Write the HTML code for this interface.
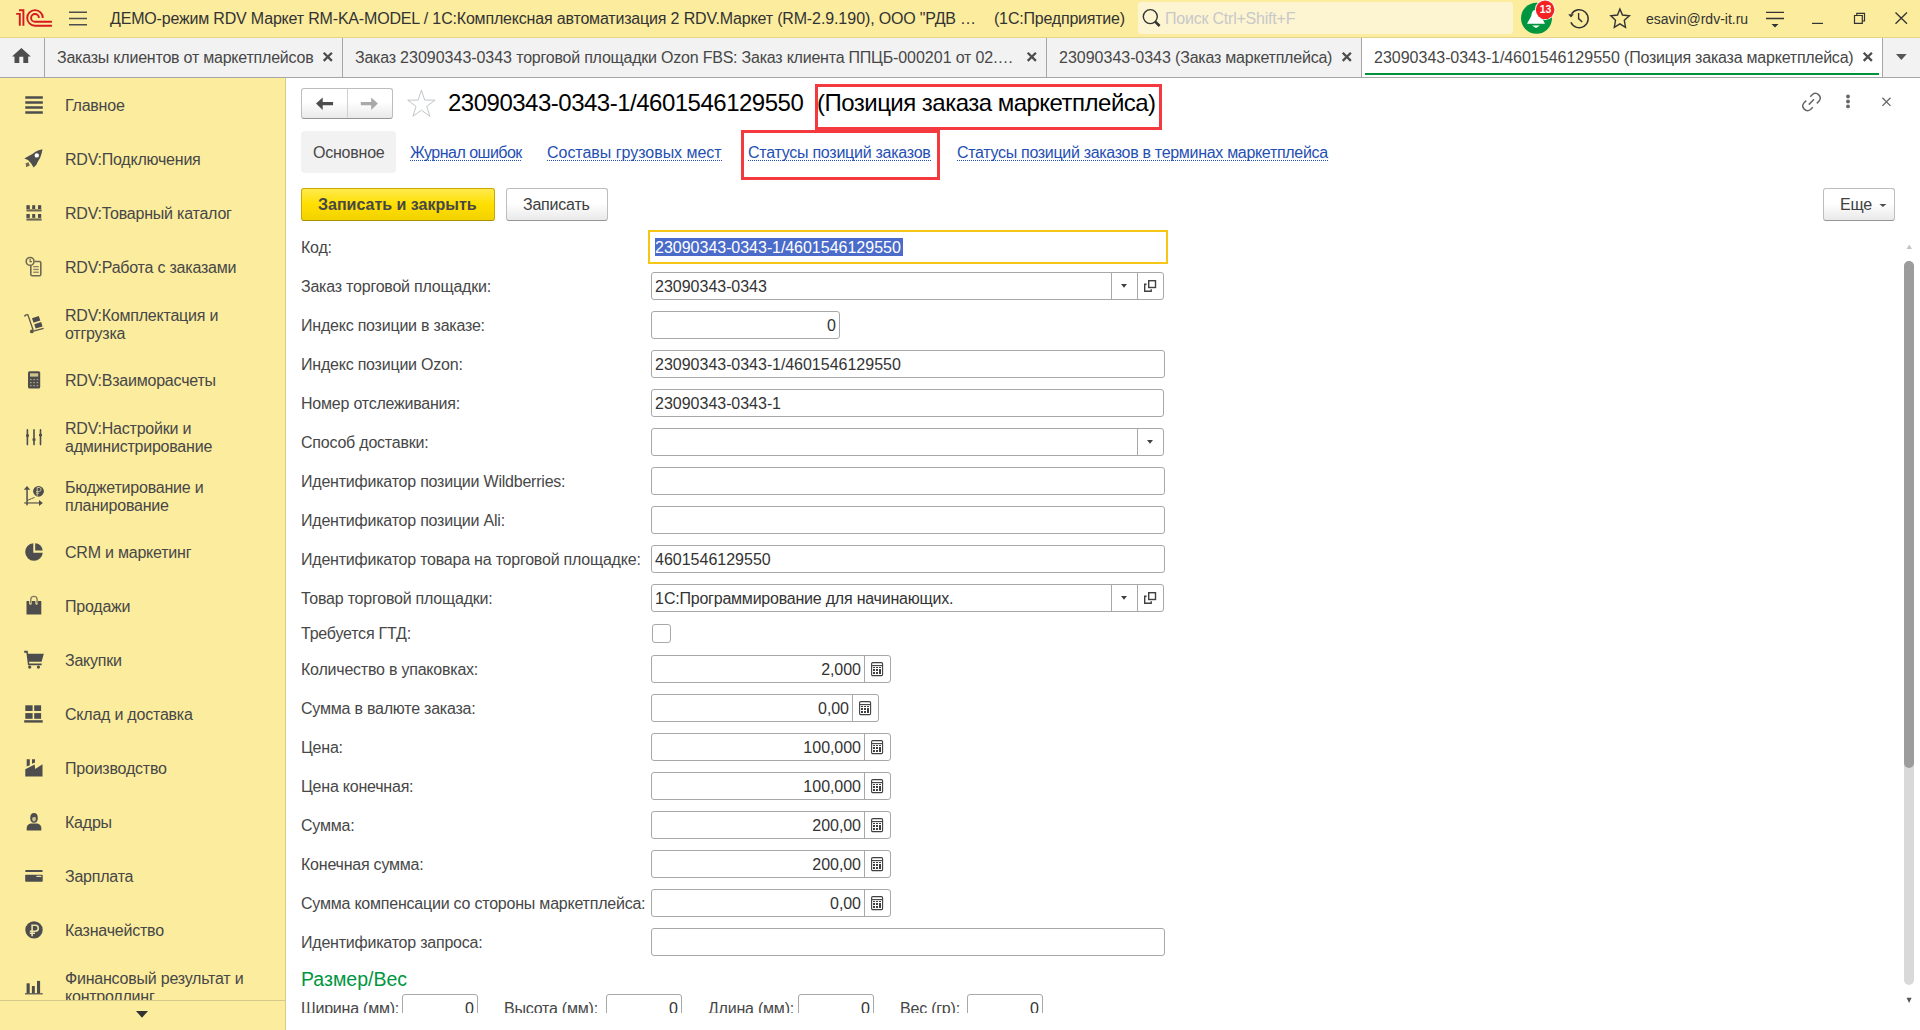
<!DOCTYPE html>
<html><head><meta charset="utf-8">
<style>
*{box-sizing:border-box;margin:0;padding:0}
html,body{width:1920px;height:1030px;overflow:hidden;background:#fff;font-family:"Liberation Sans",sans-serif;font-size:16px;color:#474747}
.abs{position:absolute}
#top{position:absolute;left:0;top:0;width:1920px;height:38px;background:#FBEC9E;border-bottom:1px solid #E3D48A}
#tabs{position:absolute;left:0;top:38px;width:1920px;height:40px;background:#F2F2F2;border-bottom:1px solid #A6A6A6}
#side{position:absolute;left:0;top:78px;width:286px;height:952px;background:#FBEC9E;border-right:1px solid #D9CB86}
.t{position:absolute;white-space:nowrap;line-height:18px;letter-spacing:-0.22px}
.d{letter-spacing:0}
.ttl .d{letter-spacing:-0.5px}
.tab{position:absolute;top:0;height:39px;border-left:1px solid #A6A6A6}
.tab .t{top:11px}
.x{position:absolute;top:14px;width:11px;height:11px}
.si{position:absolute;left:0;width:285px}
.si .t{left:65px}
.ic{position:absolute;left:24px;width:20px;height:20px}
.btn{position:absolute;border:1px solid #BDBDBD;border-bottom-color:#969696;border-radius:3px;background:linear-gradient(#FFFFFF 45%,#E9E9E9)}
.ybtn{border-color:#C7A900;border-bottom-color:#A88F00;background:linear-gradient(#FFEA4D,#FFDF00 50%,#F2D200)}
.lnk{color:#1F4FB3;background-image:linear-gradient(to right,#1F4FB3 50%,transparent 50%);background-size:2px 1px;background-repeat:repeat-x;background-position:0 16px;padding-bottom:0}
.inp{position:absolute;height:28px;border:1px solid #A8A8A8;border-radius:3px;background:#fff}
.vt{color:#333}
</style></head>
<body>
<div id="top">
<svg class="abs" style="left:0;top:0" width="60" height="38" viewBox="0 0 60 38"><g fill="none" stroke="#D71920" stroke-width="1.9" stroke-linecap="butt"><path d="M16.2 13.9H19.8V25.8M19 10.2H23.4V25.8"/><path d="M42.8 17.9A7.8 7.8 0 1 0 35 25.7H51.9M38.9 17.9A3.9 3.9 0 1 0 35 21.8H51.9"/></g></svg>
<svg class="abs" style="left:68px;top:0" width="22" height="38"><g stroke="#4D4D4D" stroke-width="1.6"><path d="M1 12.3H19M1 18.5H19M1 24.8H19"/></g></svg>
<div class="t" style="left:110px;top:10px;color:#333;letter-spacing:-0.18px">ДЕМО-режим RDV Маркет RM-KA-MODEL / <span class="d">1</span>С:Комплексная автоматизация <span class="d">2</span> RDV.Маркет (RM-<span class="d">2</span>.<span class="d">9</span>.<span class="d">190</span>), ООО "РДВ …</div>
<div class="t" style="left:994px;top:10px;color:#333">(<span class="d">1</span>С:Предприятие)</div>
<div class="abs" style="left:1138px;top:2px;width:375px;height:32px;background:#FDF5D2;border-radius:3px"></div>
<svg class="abs" style="left:1138px;top:0" width="30" height="38"><circle cx="12.3" cy="16.6" r="7" fill="none" stroke="#333" stroke-width="1.4"/><path d="M17.2 21.6L21.6 26" stroke="#333" stroke-width="2.6"/></svg>
<div class="t" style="left:1165px;top:10px;color:#C8C8C8">Поиск Ctrl+Shift+F</div>
<svg class="abs" style="left:1516px;top:0" width="40" height="36" viewBox="1516 0 40 36">
<circle cx="1536.5" cy="18.25" r="15.5" fill="#009640"/>
<path d="M1534.8 10C1533 10 1531.5 13 1531.3 16L1527 23.8H1545L1541 16" fill="#fff"/>
<path d="M1532 25.4H1540L1536 28Z" fill="#fff"/>
<circle cx="1545.1" cy="9.8" r="10.2" fill="#fff"/>
<circle cx="1545.1" cy="9.8" r="9.3" fill="#F42323"/>

</svg>
<div class="abs" style="left:1535px;top:3px;width:21px;text-align:center;font-weight:bold;font-size:10.5px;line-height:12px;color:#fff;letter-spacing:0"><span class="d">13</span></div>
<svg class="abs" style="left:1560px;top:0" width="40" height="36" viewBox="1560 0 40 36">
<path d="M1570.9 22.3A9 9 0 1 0 1571.6 13.8" fill="none" stroke="#333" stroke-width="1.5"/>
<path d="M1568.2 14.3L1573.8 14.3L1571 17.6Z" fill="#333"/>
<path d="M1578.6 13V18.6L1582.2 22" fill="none" stroke="#333" stroke-width="1.4"/>
</svg>
<svg class="abs" style="left:1605px;top:0" width="30" height="36" viewBox="1605 0 30 36">
<path d="M1619.9 9.1L1622.5 15L1629.4 15.7L1624.3 20.3L1625.5 27.4L1619.9 23.8L1614.3 27.4L1615.5 20.3L1610.8 15.7L1617.5 15Z" fill="none" stroke="#333" stroke-width="1.4" stroke-linejoin="miter"/>
</svg>
<div class="t" style="left:1646px;top:10px;color:#333;font-size:14px;letter-spacing:0">esavin@rdv-it.ru</div>
<svg class="abs" style="left:1760px;top:0" width="160" height="36" viewBox="1760 0 160 36">
<path d="M1766 12.3H1784M1766 18.5H1784" stroke="#333" stroke-width="1.3"/>
<path d="M1771.5 24H1778.5L1775 27.6Z" fill="#333"/>
<path d="M1812 23.4H1823" stroke="#333" stroke-width="1.2"/>
<path d="M1854.5 15.5H1862.3V23.3H1854.5Z M1856.8 15.5V13.4H1864.5V21H1862.3" fill="none" stroke="#333" stroke-width="1.2"/>
<path d="M1895.5 12.5L1907 23.8M1907 12.5L1895.5 23.8" stroke="#333" stroke-width="1.3"/>
</svg>
</div>
<div id="tabs">
<svg class="abs" style="left:12px;top:9px" width="20" height="18" viewBox="0 0 20 18"><path d="M9.4 1.1L0 9.6H2.5V16H7.3V9.8H11.3V16H16.2V9.6H18.8Z" fill="#4D4D4D"/></svg>
<div class="abs" style="left:44px;top:0;width:1px;height:39px;background:#A6A6A6"></div>
<div class="t" style="left:57px;top:11px">Заказы клиентов от маркетплейсов</div>
<svg class="abs" style="left:322px;top:13px" width="12" height="12" viewBox="0 0 12 12"><path d="M1.7 1.7L9.9 9.9M9.9 1.7L1.7 9.9" stroke="#4D4D4D" stroke-width="2.3"/></svg>
<div class="abs" style="left:342px;top:0;width:1px;height:39px;background:#A6A6A6"></div>
<div class="t" style="left:355px;top:11px">Заказ <span class="d">23090343</span>-<span class="d">0343</span> торговой площадки Ozon FBS: Заказ клиента ППЦБ-<span class="d">000201</span> от <span class="d">02</span>.…</div>
<svg class="abs" style="left:1026px;top:13px" width="12" height="12" viewBox="0 0 12 12"><path d="M1.7 1.7L9.9 9.9M9.9 1.7L1.7 9.9" stroke="#4D4D4D" stroke-width="2.3"/></svg>
<div class="abs" style="left:1046px;top:0;width:1px;height:39px;background:#A6A6A6"></div>
<div class="t" style="left:1059px;top:11px"><span class="d">23090343</span>-<span class="d">0343</span> (Заказ маркетплейса)</div>
<svg class="abs" style="left:1341px;top:13px" width="12" height="12" viewBox="0 0 12 12"><path d="M1.7 1.7L9.9 9.9M9.9 1.7L1.7 9.9" stroke="#4D4D4D" stroke-width="2.3"/></svg>
<div class="abs" style="left:1361px;top:0;width:521px;height:39px;background:#fff"></div>
<div class="abs" style="left:1361px;top:0;width:1px;height:39px;background:#A6A6A6"></div>
<div class="t" style="left:1374px;top:11px"><span class="d">23090343</span>-<span class="d">0343</span>-<span class="d">1</span>/<span class="d">4601546129550</span> (Позиция заказа маркетплейса)</div>
<svg class="abs" style="left:1862px;top:13px" width="12" height="12" viewBox="0 0 12 12"><path d="M1.7 1.7L9.9 9.9M9.9 1.7L1.7 9.9" stroke="#4D4D4D" stroke-width="2.3"/></svg>
<div class="abs" style="left:1365px;top:35px;width:514px;height:2px;background:#00913D"></div>
<div class="abs" style="left:1882px;top:0;width:1px;height:39px;background:#A6A6A6"></div>
<svg class="abs" style="left:1890px;top:14px" width="20" height="10" viewBox="0 0 20 10"><path d="M6 2H16.7L11.35 8Z" fill="#555"/></svg>
</div>
<div id="side">
<div class="abs" style="left:0;top:0;width:285px;height:922px;overflow:hidden">
<div class="t" style="left:65px;top:19px">Главное</div>
<div class="t" style="left:65px;top:73px">RDV:Подключения</div>
<div class="t" style="left:65px;top:127px">RDV:Товарный каталог</div>
<div class="t" style="left:65px;top:181px">RDV:Работа с заказами</div>
<div class="t" style="left:65px;top:229px">RDV:Комплектация и<br>отгрузка</div>
<div class="t" style="left:65px;top:294px">RDV:Взаиморасчеты</div>
<div class="t" style="left:65px;top:342px">RDV:Настройки и<br>администрирование</div>
<div class="t" style="left:65px;top:401px">Бюджетирование и<br>планирование</div>
<div class="t" style="left:65px;top:466px">CRM и маркетинг</div>
<div class="t" style="left:65px;top:520px">Продажи</div>
<div class="t" style="left:65px;top:574px">Закупки</div>
<div class="t" style="left:65px;top:628px">Склад и доставка</div>
<div class="t" style="left:65px;top:682px">Производство</div>
<div class="t" style="left:65px;top:736px">Кадры</div>
<div class="t" style="left:65px;top:790px">Зарплата</div>
<div class="t" style="left:65px;top:844px">Казначейство</div>
<div class="t" style="left:65px;top:892px">Финансовый результат и<br>контроллинг</div>
</div>
<svg class="abs" style="left:0;top:-78px" width="60" height="1030" viewBox="0 0 60 1030"><path d="M25.3 96.3H42.8V98.7H25.3ZM25.3 101.3H42.8V103.7H25.3ZM25.3 106.3H42.8V108.7H25.3ZM25.3 111.3H42.8V113.7H25.3Z" fill="#4D4D4D"/><path d="M42.5 149.2L38.6 150.3Q35.2 151.6 32.8 153.8L24.3 158.4L28 160L31 163.2L33.6 167.4L36.4 164.8L37.9 161.5Q40.6 158 41.6 153.6Z" fill="#4D4D4D"/><circle cx="36.8" cy="155.4" r="2.2" fill="#fff"/><path d="M25.6 163.2L28.6 162.3L29.8 165.4L26.2 167.2Z" fill="#6d6a58"/><g fill="#4D4D4D"><rect x="26.4" y="205.2" width="3.4" height="3.8"/><rect x="32.2" y="205.2" width="3" height="3.8"/><rect x="38" y="205.2" width="3.2" height="3.8"/><rect x="26.4" y="214" width="3.4" height="3.9"/><rect x="32.2" y="214" width="3" height="3.9"/><rect x="38" y="214" width="3.2" height="3.9"/></g><g fill="#6f6a55"><rect x="26.4" y="209.3" width="15.2" height="2.2"/><rect x="26.4" y="218.4" width="15.2" height="2.2"/></g><g fill="none" stroke="#6f6a55" stroke-width="1.6"><path d="M34.5 261.5H39.5Q40.8 261.5 40.8 263V274.5Q40.8 275.8 39.5 275.8H32.2Q30.8 275.8 30.8 274.5V265.5"/><circle cx="30.1" cy="261.4" r="3.9"/></g><path d="M30.1 259V261.6H32" stroke="#6f6a55" stroke-width="1.2" fill="none"/><g fill="#8a846c"><rect x="33.2" y="266" width="5.6" height="1.3"/><rect x="33.2" y="268.8" width="5.6" height="1.3"/><rect x="33.2" y="271.6" width="5.6" height="1.3"/></g><g fill="none" stroke="#5a5648" stroke-width="1.3"><path d="M24.6 316.5Q25 314.6 27.8 314.6L33.3 330.5"/><path d="M33.4 331.2L43.6 328.3"/></g><circle cx="31.8" cy="331.4" r="1.9" fill="#5a5648"/><g fill="#4D4D4D"><path d="M32 318.3L38.8 316L40.3 320.6L33.5 322.8Z"/><path d="M34.3 324.3L41.2 322L42.5 326.4L35.6 328.6Z"/></g><rect x="28" y="371.2" width="12.2" height="17.4" rx="1.6" fill="#4D4D4D"/><rect x="30" y="373.3" width="8.2" height="3.3" fill="#FBEC9E" opacity="0.75"/><g fill="#FBEC9E" opacity="0.55"><rect x="30" y="379" width="1.6" height="1.2"/><rect x="33.3" y="379" width="1.6" height="1.2"/><rect x="36.6" y="379" width="1.6" height="1.2"/><rect x="30" y="382" width="1.6" height="1.2"/><rect x="33.3" y="382" width="1.6" height="1.2"/><rect x="36.6" y="382" width="1.6" height="1.2"/><rect x="30" y="385" width="1.6" height="1.2"/><rect x="33.3" y="385" width="1.6" height="1.2"/><rect x="36.6" y="385" width="1.6" height="1.2"/></g><g stroke="#4D4D4D" stroke-width="1.6" stroke-linecap="round"><path d="M27.4 429.8V444.6M34 429.8V444.6M40.5 429.8V444.6"/></g><g fill="#4D4D4D"><rect x="26" y="434.5" width="3" height="2.2"/><rect x="32.5" y="438.5" width="3" height="2.2"/><rect x="39" y="434" width="3" height="2.2"/></g><g fill="#4D4D4D"><path d="M27 486.1L30.2 489.8H23.8Z"/><rect x="26.3" y="489.5" width="1.5" height="15.8"/><path d="M42.8 502.9L39 499.9V505.9Z"/><rect x="24.2" y="502.2" width="15" height="1.5" opacity="0.75"/><circle cx="38.5" cy="491.3" r="5.4"/><path d="M27.6 500.3L30 499.3L31.5 498.6L34.5 497.5" stroke="#4D4D4D" stroke-width="0.9" fill="none"/></g><path d="M37.2 496.5V487.5H39.3Q41 487.5 41 489.5Q41 491.4 39.3 491.4H36M36 493.3H39" stroke="#d9cf9a" stroke-width="0.9" fill="none"/><path d="M33.3 543.2A8.8 8.8 0 1 0 42.8 552.8H33.3Z" fill="#4D4D4D"/><path d="M35.2 543.2A7.5 7.5 0 0 1 42.6 550.6H35.2Z" fill="#4D4D4D"/><path d="M26.5 601H29.2V604Q30.5 605.5 31.8 604V601H35.4V604Q36.6 605.5 37.8 604V601H41.3V614.5H26.5Z" fill="#4D4D4D"/><path d="M30.8 603.5V599.5Q30.8 596.4 34 596.4Q37.1 596.4 37.1 599.5V603.5" fill="none" stroke="#827c62" stroke-width="1.4"/><g fill="#4D4D4D"><path d="M24.2 650.8H27.7L28.1 653.8H43.8L41.6 661.8H29L29.3 663.4H41.7V665.2H28L26.4 652.7H24.2Z"/><circle cx="29.7" cy="667.1" r="1.6"/><circle cx="38.4" cy="667.1" r="1.6"/></g><g fill="#4D4D4D"><rect x="25.3" y="705.3" width="7.3" height="5.7"/><rect x="34.2" y="705.3" width="6.9" height="5.7"/><rect x="25.3" y="713.1" width="7.3" height="5.7"/><rect x="34.2" y="713.1" width="6.9" height="5.7"/><rect x="24.2" y="720.2" width="18.5" height="2.4"/></g><g fill="#4D4D4D"><path d="M26.7 759.2H29.8V765.3L26.7 766.6Z"/><path d="M32 759.2H35V762.6L32 763.8Z"/><path d="M25.3 769.3L34.6 764.5L35.2 769L42.5 764.3V776.6H25.3Z"/></g><g fill="#4D4D4D"><path d="M30.2 818Q30.2 813.1 34 813.1Q37.8 813.1 37.8 818Q37.8 822.7 34 822.7Q30.2 822.7 30.2 818Z"/><path d="M26.7 828Q26.7 824.8 30.5 823.4H37.5Q41.3 824.8 41.3 828V830.6H26.7Z"/></g><path d="M32.2 817.8Q34 816.5 35.8 817.2V819.8Q35.3 821.5 34 821.5Q32.7 821.5 32.2 819.8Z" fill="#c9c08e"/><g fill="#4D4D4D"><rect x="25.2" y="870" width="17.5" height="2" rx="0.8"/><rect x="25.2" y="874.7" width="17.5" height="7.1" rx="0.8"/></g><rect x="36.3" y="875.8" width="5.2" height="1.3" rx="0.6" fill="#e8dfa6"/><circle cx="34" cy="929.9" r="8.7" fill="#4D4D4D"/><path d="M32.1 936.3V925.3H35.4Q38.3 925.3 38.3 928.3Q38.3 931.2 35.4 931.2H29.8M29.8 933.3H35" stroke="#efe5aa" stroke-width="1.6" fill="none"/><g fill="#4D4D4D"><rect x="26.6" y="983.3" width="3.1" height="10.2"/><rect x="31.9" y="986" width="2.9" height="7.5"/><rect x="37" y="980.9" width="3.1" height="12.6"/><rect x="25" y="993" width="17.7" height="1.5" opacity="0.8"/></g></svg>
<div class="abs" style="left:0;top:922px;width:285px;height:1px;background:#D6C98C"></div>
<svg class="abs" style="left:130px;top:928px" width="24" height="14" viewBox="0 0 24 14"><path d="M6 5H18L12 11.7Z" fill="#333"/></svg>
</div>










<!--FORM-->
<div class="btn" style="left:301px;top:88px;width:92px;height:31px"></div>
<div class="abs" style="left:347px;top:89px;width:1px;height:29px;background:#D0D0D0"></div>
<svg class="abs" style="left:300px;top:85px" width="100" height="36" viewBox="300 85 100 36"><path d="M316 103.6L322.7 97.4V102H333.1V105.2H322.7V109.9Z" fill="#4D4D4D"/><path d="M377.9 103.6L371.2 97.4V102H360.8V105.2H371.2V109.9Z" fill="#A9A9A9"/></svg>
<svg class="abs" style="left:400px;top:85px" width="44" height="36" viewBox="400 85 44 36"><path d="M421.40 90.20L424.69 100.07L435.10 100.15L426.73 106.33L429.86 116.25L421.40 110.20L412.94 116.25L416.07 106.33L407.70 100.15L418.11 100.07Z" fill="none" stroke="#B9C0C4" stroke-width="0.9" stroke-linejoin="miter"/></svg>
<div class="t ttl" style="left:448px;top:89px;font-size:24px;line-height:28px;color:#000;letter-spacing:-0.5px"><span class="d">23090343</span>-<span class="d">0343</span>-<span class="d">1</span>/<span class="d">4601546129550</span></div>
<div class="t ttl" style="left:817px;top:89px;font-size:24px;line-height:28px;color:#000;letter-spacing:-0.52px">(Позиция заказа маркетплейса)</div>
<svg class="abs" style="left:1795px;top:85px" width="110" height="32" viewBox="1795 85 110 32"><g fill="none" stroke="#666" stroke-width="1.5"><path d="M1810.2 96.8L1812.5 94.5A4.7 4.7 0 0 1 1819.1 101.1L1816.8 103.4"/><path d="M1806.2 100.6L1803.9 102.9A4.7 4.7 0 0 0 1810.5 109.5L1812.8 107.2"/><path d="M1808.8 104.6L1814 99.3"/></g><g fill="#666"><circle cx="1848" cy="96.5" r="1.9"/><circle cx="1848" cy="101.5" r="1.9"/><circle cx="1848" cy="106.4" r="1.9"/></g><path d="M1882.4 97.7L1890.5 105.9M1890.5 97.7L1882.4 105.9" stroke="#666" stroke-width="1.3"/></svg>
<div class="abs" style="left:301px;top:131px;width:95px;height:42px;background:#F2F2F2;border-radius:4px"></div>
<div class="t" style="left:313px;top:144px">Основное</div>
<div class="t lnk" style="left:410px;top:144px;letter-spacing:-0.52px">Журнал ошибок</div>
<div class="t lnk" style="left:547px;top:144px;letter-spacing:-0.03px">Составы грузовых мест</div>
<div class="t lnk" style="left:748px;top:144px;letter-spacing:-0.26px">Статусы позиций заказов</div>
<div class="t lnk" style="left:957px;top:144px;letter-spacing:-0.31px">Статусы позиций заказов в терминах маркетплейса</div>
<div class="abs" style="left:655px;top:238px;width:1px;height:18px;background:#222"></div>
<div class="btn ybtn" style="left:301px;top:188px;width:194px;height:33px"></div>
<div class="t" style="left:318px;top:196px;font-weight:bold;letter-spacing:0">Записать и закрыть</div>
<div class="btn" style="left:506px;top:188px;width:102px;height:33px"></div>
<div class="t" style="left:523px;top:196px;color:#404040">Записать</div>
<div class="btn" style="left:1823px;top:188px;width:72px;height:33px"></div>
<div class="t" style="left:1840px;top:196px;color:#404040">Еще</div>
<svg class="abs" style="left:1876px;top:200px" width="14" height="10" viewBox="1876 200 14 10"><path d="M1879.4 204H1886.4L1882.9 207Z" fill="#4D4D4D"/></svg>
<div class="abs" style="left:815px;top:84px;width:347px;height:46px;border:3px solid #F4393F"></div>
<div class="abs" style="left:741px;top:130px;width:199px;height:50px;border:3px solid #F4393F"></div>
<div class="t" style="left:301px;top:239px">Код:</div>
<div class="abs" style="left:648px;top:230px;width:520px;height:34px;border:2px solid #F5C518;background:#fff"></div>
<div class="abs" style="left:655px;top:238px;width:248px;height:18px;background:#4A6BC9"></div>
<div class="t" style="left:655px;top:239px;color:#fff"><span class="d">23090343</span>-<span class="d">0343</span>-<span class="d">1</span>/<span class="d">4601546129550</span></div>
<div class="t" style="left:301px;top:278px">Заказ торговой площадки:</div>
<div class="inp" style="left:651px;top:272px;width:513px"></div>
<div class="t vt" style="left:655px;top:278px"><span class="d">23090343</span>-<span class="d">0343</span></div>
<div class="abs" style="left:1111px;top:272px;width:1px;height:28px;background:#A8A8A8"></div>
<div class="abs" style="left:1137px;top:272px;width:1px;height:28px;background:#A8A8A8"></div>
<svg class="abs" style="left:1118px;top:282px" width="12" height="8" viewBox="0 0 12 8"><path d="M3 2H9L6 5.7Z" fill="#404040"/></svg>
<svg class="abs" style="left:1142px;top:278px" width="18" height="18" viewBox="1142 278 18 18"><g fill="none" stroke="#404040" stroke-width="1.4"><rect x="1148.7" y="280.7" width="6.8" height="6.8"/><path d="M1146.6 284.2H1144.7V291.3H1151.2V289.3"/></g></svg>
<div class="t" style="left:301px;top:317px">Индекс позиции в заказе:</div>
<div class="inp" style="left:651px;top:311px;width:189px"></div>
<div class="t vt" style="right:1084px;top:317px"><span class="d">0</span></div>
<div class="t" style="left:301px;top:356px">Индекс позиции Ozon:</div>
<div class="inp" style="left:651px;top:350px;width:514px"></div>
<div class="t vt" style="left:655px;top:356px"><span class="d">23090343</span>-<span class="d">0343</span>-<span class="d">1</span>/<span class="d">4601546129550</span></div>
<div class="t" style="left:301px;top:395px">Номер отслеживания:</div>
<div class="inp" style="left:651px;top:389px;width:513px"></div>
<div class="t vt" style="left:655px;top:395px"><span class="d">23090343</span>-<span class="d">0343</span>-<span class="d">1</span></div>
<div class="t" style="left:301px;top:434px">Способ доставки:</div>
<div class="inp" style="left:651px;top:428px;width:513px"></div>
<div class="abs" style="left:1137px;top:428px;width:1px;height:28px;background:#A8A8A8"></div>
<svg class="abs" style="left:1144px;top:438px" width="12" height="8" viewBox="0 0 12 8"><path d="M3 2H9L6 5.7Z" fill="#404040"/></svg>
<div class="t" style="left:301px;top:473px">Идентификатор позиции Wildberries:</div>
<div class="inp" style="left:651px;top:467px;width:514px"></div>
<div class="t" style="left:301px;top:512px">Идентификатор позиции Ali:</div>
<div class="inp" style="left:651px;top:506px;width:514px"></div>
<div class="t" style="left:301px;top:551px">Идентификатор товара на торговой площадке:</div>
<div class="inp" style="left:651px;top:545px;width:514px"></div>
<div class="t vt" style="left:655px;top:551px"><span class="d">4601546129550</span></div>
<div class="t" style="left:301px;top:590px">Товар торговой площадки:</div>
<div class="inp" style="left:651px;top:584px;width:513px"></div>
<div class="t vt" style="left:655px;top:590px"><span class="d">1</span>С:Программирование для начинающих.</div>
<div class="abs" style="left:1111px;top:584px;width:1px;height:28px;background:#A8A8A8"></div>
<div class="abs" style="left:1137px;top:584px;width:1px;height:28px;background:#A8A8A8"></div>
<svg class="abs" style="left:1118px;top:594px" width="12" height="8" viewBox="0 0 12 8"><path d="M3 2H9L6 5.7Z" fill="#404040"/></svg>
<svg class="abs" style="left:1142px;top:590px" width="18" height="18" viewBox="1142 590 18 18"><g fill="none" stroke="#404040" stroke-width="1.4"><rect x="1148.7" y="592.7" width="6.8" height="6.8"/><path d="M1146.6 596.2H1144.7V603.3H1151.2V601.3"/></g></svg>
<div class="t" style="left:301px;top:625px">Требуется ГТД:</div>
<div class="abs" style="left:652px;top:624px;width:19px;height:19px;border:1px solid #A8A8A8;border-radius:3px"></div>
<div class="t" style="left:301px;top:661px">Количество в упаковках:</div>
<div class="inp" style="left:651px;top:655px;width:240px"></div>
<div class="abs" style="left:864px;top:655px;width:1px;height:28px;background:#A8A8A8"></div>
<div class="t vt" style="right:1059px;top:661px"><span class="d">2</span>,<span class="d">000</span></div>
<svg class="abs" style="left:871px;top:662px" width="13" height="15" viewBox="0 0 13 15"><g fill="none" stroke="#404040" stroke-width="1.1"><rect x="0.6" y="0.6" width="11" height="13" rx="1.2"/><path d="M0.6 3.6H11.6"/></g><g fill="#404040"><rect x="2" y="5" width="2" height="1"/><rect x="5" y="5" width="2" height="1"/><rect x="8" y="5" width="2" height="1"/><rect x="2" y="7" width="2" height="2"/><rect x="5" y="7" width="2" height="2"/><rect x="2" y="10" width="2" height="2"/><rect x="5" y="10" width="2" height="2"/><rect x="8" y="7" width="2" height="5"/></g></svg>
<div class="t" style="left:301px;top:700px">Сумма в валюте заказа:</div>
<div class="inp" style="left:651px;top:694px;width:228px"></div>
<div class="abs" style="left:852px;top:694px;width:1px;height:28px;background:#A8A8A8"></div>
<div class="t vt" style="right:1071px;top:700px"><span class="d">0</span>,<span class="d">00</span></div>
<svg class="abs" style="left:859px;top:701px" width="13" height="15" viewBox="0 0 13 15"><g fill="none" stroke="#404040" stroke-width="1.1"><rect x="0.6" y="0.6" width="11" height="13" rx="1.2"/><path d="M0.6 3.6H11.6"/></g><g fill="#404040"><rect x="2" y="5" width="2" height="1"/><rect x="5" y="5" width="2" height="1"/><rect x="8" y="5" width="2" height="1"/><rect x="2" y="7" width="2" height="2"/><rect x="5" y="7" width="2" height="2"/><rect x="2" y="10" width="2" height="2"/><rect x="5" y="10" width="2" height="2"/><rect x="8" y="7" width="2" height="5"/></g></svg>
<div class="t" style="left:301px;top:739px">Цена:</div>
<div class="inp" style="left:651px;top:733px;width:240px"></div>
<div class="abs" style="left:864px;top:733px;width:1px;height:28px;background:#A8A8A8"></div>
<div class="t vt" style="right:1059px;top:739px"><span class="d">100</span>,<span class="d">000</span></div>
<svg class="abs" style="left:871px;top:740px" width="13" height="15" viewBox="0 0 13 15"><g fill="none" stroke="#404040" stroke-width="1.1"><rect x="0.6" y="0.6" width="11" height="13" rx="1.2"/><path d="M0.6 3.6H11.6"/></g><g fill="#404040"><rect x="2" y="5" width="2" height="1"/><rect x="5" y="5" width="2" height="1"/><rect x="8" y="5" width="2" height="1"/><rect x="2" y="7" width="2" height="2"/><rect x="5" y="7" width="2" height="2"/><rect x="2" y="10" width="2" height="2"/><rect x="5" y="10" width="2" height="2"/><rect x="8" y="7" width="2" height="5"/></g></svg>
<div class="t" style="left:301px;top:778px">Цена конечная:</div>
<div class="inp" style="left:651px;top:772px;width:240px"></div>
<div class="abs" style="left:864px;top:772px;width:1px;height:28px;background:#A8A8A8"></div>
<div class="t vt" style="right:1059px;top:778px"><span class="d">100</span>,<span class="d">000</span></div>
<svg class="abs" style="left:871px;top:779px" width="13" height="15" viewBox="0 0 13 15"><g fill="none" stroke="#404040" stroke-width="1.1"><rect x="0.6" y="0.6" width="11" height="13" rx="1.2"/><path d="M0.6 3.6H11.6"/></g><g fill="#404040"><rect x="2" y="5" width="2" height="1"/><rect x="5" y="5" width="2" height="1"/><rect x="8" y="5" width="2" height="1"/><rect x="2" y="7" width="2" height="2"/><rect x="5" y="7" width="2" height="2"/><rect x="2" y="10" width="2" height="2"/><rect x="5" y="10" width="2" height="2"/><rect x="8" y="7" width="2" height="5"/></g></svg>
<div class="t" style="left:301px;top:817px">Сумма:</div>
<div class="inp" style="left:651px;top:811px;width:240px"></div>
<div class="abs" style="left:864px;top:811px;width:1px;height:28px;background:#A8A8A8"></div>
<div class="t vt" style="right:1059px;top:817px"><span class="d">200</span>,<span class="d">00</span></div>
<svg class="abs" style="left:871px;top:818px" width="13" height="15" viewBox="0 0 13 15"><g fill="none" stroke="#404040" stroke-width="1.1"><rect x="0.6" y="0.6" width="11" height="13" rx="1.2"/><path d="M0.6 3.6H11.6"/></g><g fill="#404040"><rect x="2" y="5" width="2" height="1"/><rect x="5" y="5" width="2" height="1"/><rect x="8" y="5" width="2" height="1"/><rect x="2" y="7" width="2" height="2"/><rect x="5" y="7" width="2" height="2"/><rect x="2" y="10" width="2" height="2"/><rect x="5" y="10" width="2" height="2"/><rect x="8" y="7" width="2" height="5"/></g></svg>
<div class="t" style="left:301px;top:856px">Конечная сумма:</div>
<div class="inp" style="left:651px;top:850px;width:240px"></div>
<div class="abs" style="left:864px;top:850px;width:1px;height:28px;background:#A8A8A8"></div>
<div class="t vt" style="right:1059px;top:856px"><span class="d">200</span>,<span class="d">00</span></div>
<svg class="abs" style="left:871px;top:857px" width="13" height="15" viewBox="0 0 13 15"><g fill="none" stroke="#404040" stroke-width="1.1"><rect x="0.6" y="0.6" width="11" height="13" rx="1.2"/><path d="M0.6 3.6H11.6"/></g><g fill="#404040"><rect x="2" y="5" width="2" height="1"/><rect x="5" y="5" width="2" height="1"/><rect x="8" y="5" width="2" height="1"/><rect x="2" y="7" width="2" height="2"/><rect x="5" y="7" width="2" height="2"/><rect x="2" y="10" width="2" height="2"/><rect x="5" y="10" width="2" height="2"/><rect x="8" y="7" width="2" height="5"/></g></svg>
<div class="t" style="left:301px;top:895px">Сумма компенсации со стороны маркетплейса:</div>
<div class="inp" style="left:651px;top:889px;width:240px"></div>
<div class="abs" style="left:864px;top:889px;width:1px;height:28px;background:#A8A8A8"></div>
<div class="t vt" style="right:1059px;top:895px"><span class="d">0</span>,<span class="d">00</span></div>
<svg class="abs" style="left:871px;top:896px" width="13" height="15" viewBox="0 0 13 15"><g fill="none" stroke="#404040" stroke-width="1.1"><rect x="0.6" y="0.6" width="11" height="13" rx="1.2"/><path d="M0.6 3.6H11.6"/></g><g fill="#404040"><rect x="2" y="5" width="2" height="1"/><rect x="5" y="5" width="2" height="1"/><rect x="8" y="5" width="2" height="1"/><rect x="2" y="7" width="2" height="2"/><rect x="5" y="7" width="2" height="2"/><rect x="2" y="10" width="2" height="2"/><rect x="5" y="10" width="2" height="2"/><rect x="8" y="7" width="2" height="5"/></g></svg>
<div class="t" style="left:301px;top:934px">Идентификатор запроса:</div>
<div class="inp" style="left:651px;top:928px;width:514px"></div>
<div class="t" style="left:301px;top:968px;font-size:19.5px;line-height:22px;color:#00963F;letter-spacing:0">Размер/Вес</div>
<div class="t" style="left:301px;top:1000px">Ширина (мм):</div>
<div class="inp" style="left:402px;top:994px;width:76px"></div>
<div class="t vt" style="right:1446px;top:1000px"><span class="d">0</span></div>
<div class="t" style="left:504px;top:1000px">Высота (мм):</div>
<div class="inp" style="left:606px;top:994px;width:76px"></div>
<div class="t vt" style="right:1242px;top:1000px"><span class="d">0</span></div>
<div class="t" style="left:708px;top:1000px">Длина (мм):</div>
<div class="inp" style="left:798px;top:994px;width:76px"></div>
<div class="t vt" style="right:1050px;top:1000px"><span class="d">0</span></div>
<div class="t" style="left:900px;top:1000px">Вес (гр):</div>
<div class="inp" style="left:967px;top:994px;width:76px"></div>
<div class="t vt" style="right:881px;top:1000px"><span class="d">0</span></div>
<div class="abs" style="left:286px;top:1013px;width:1600px;height:17px;background:#fff"></div>
<svg class="abs" style="left:1900px;top:240px" width="20" height="12" viewBox="1900 240 20 12"><path d="M1906.5 249H1912L1909.25 244.5Z" fill="#C4C4C4"/></svg>
<div class="abs" style="left:1904px;top:261px;width:10px;height:724px;background:#D9D9D9;border-radius:5px"></div>
<div class="abs" style="left:1904px;top:261px;width:10px;height:507px;background:#9C9C9C;border-radius:5px"></div>
<svg class="abs" style="left:1900px;top:993px" width="20" height="14" viewBox="1900 993 20 14"><path d="M1906.6 997.7H1911.6L1909.1 1003Z" fill="#555"/></svg>
<!--/FORM-->
</body></html>
